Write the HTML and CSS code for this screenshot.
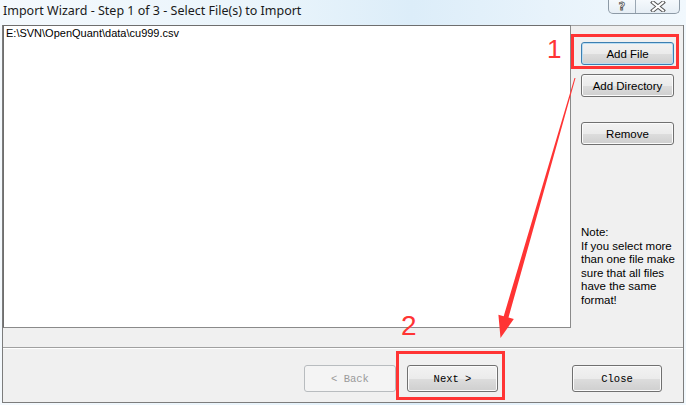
FILE: index.html
```html
<!DOCTYPE html>
<html>
<head>
<meta charset="utf-8">
<link rel="stylesheet" href="styles.css">
</head>
<body>
<div class="window">
  <div class="titlebar">
    <span class="title">Import Wizard - Step 1 of 3 - Select File(s) to Import</span>
    <div class="caption">
      <span class="cbtn help">?</span>
      <span class="cbtn close"><svg width="16" height="11" viewBox="0 0 16 11"><path d="M3 1.5 L13 9.5 M13 1.5 L3 9.5" stroke="#555" stroke-width="4" stroke-linecap="square"/><path d="M3 1.5 L13 9.5 M13 1.5 L3 9.5" stroke="#fff" stroke-width="2" stroke-linecap="square"/></svg></span>
    </div>
  </div>
  <div class="client">
    <div class="main">
      <div class="listbox">
        <div class="item">E:\SVN\OpenQuant\data\cu999.csv</div>
      </div>
      <div class="side">
        <button class="btn side-btn default">Add File</button>
        <button class="btn side-btn">Add Directory</button>
        <button class="btn side-btn remove">Remove</button>
        <div class="note">Note:<br>If you select more<br>than one file make<br>sure that all files<br>have the same<br>format!</div>
      </div>
    </div>
    <div class="strip"></div>
    <div class="footer">
      <button class="btn mono back" disabled>&lt; Back</button>
      <button class="btn mono next">Next &gt;</button>
      <button class="btn mono closebtn">Close</button>
    </div>
  </div>
  <div class="mark box1"></div>
  <div class="mark box2"></div>
  <span class="num n1">1</span>
  <span class="num n2">2</span>
  <svg class="arrow" width="686" height="405" viewBox="0 0 686 405">
    <polygon points="574.5,77.9 575.5,78.1 508.5,317.6 513.8,319.1 500.5,338 498.4,314.7 503.7,316.2" fill="#ff3434"/>
  </svg>
</div>
</body>
</html>
```
FILE: styles.css
```css
* { box-sizing: border-box; }
html, body { margin: 0; padding: 0; }
body { width: 686px; height: 405px; overflow: hidden; }

.window {
  position: relative;
  width: 686px;
  height: 405px;
  background: linear-gradient(to right, #f4f9fd 0%, #e9f4fb 40%, #dcedf9 60%, #e8f3fb 80%, #f1f8fd 100%);
  font-family: "Liberation Sans", Arial, sans-serif;
}

.titlebar {
  height: 25px;
  display: flex;
  justify-content: space-between;
  align-items: flex-start;
}
.title {
  font-family: "Noto Sans", "Open Sans", sans-serif;
  font-size: 12.5px;
  color: #1a1a1a;
  padding: 2px 0 0 3px;
  line-height: 17px;
}
.caption {
  display: flex;
  margin-right: 6px;
  margin-top: -1px;
  border: 1px solid #8d9aa6;
  border-top: none;
  border-radius: 0 0 5px 5px;
  background: linear-gradient(#f6fafd, #e6eef5);
  height: 15px;
}
.cbtn {
  display: flex;
  align-items: center;
  justify-content: center;
  height: 14px;
}
.help {
  width: 27px;
  border-right: 1px solid #9aa7b3;
  font-family: "DejaVu Sans", sans-serif;
  font-size: 11px;
  font-weight: bold;
  color: #fff;
  -webkit-text-stroke: 0.8px #555;
}
.close { width: 43px; }

.client {
  margin-left: 2px;
  width: 682px;
  height: 378px;
  border-left: 1px solid #7c7c7c;
  border-right: 1px solid #7c7c7c;
  border-bottom: 1px solid #7c7c7c;
  background: #f0f0f0;
  display: flex;
  flex-direction: column;
}

.main {
  display: flex;
  height: 303px;
}
.listbox {
  width: 568px;
  height: 303px;
  background: #fff;
  border: 1px solid #8a8a8a;
  border-top-color: #6e6e6e;
  border-left-color: #6e6e6e;
  padding: 1px 0 0 2px;
}
.item {
  font-size: 11px;
  line-height: 13px;
  color: #000;
}

.side {
  width: 112px;
  display: flex;
  flex-direction: column;
  padding: 16px 0 0 10px;
  border-top: 1px solid #a0a0a0;
}
.btn {
  font-family: "Liberation Sans", Arial, sans-serif;
  font-size: 11.5px;
  color: #000;
  border: 1px solid #707070;
  border-radius: 3px;
  background: linear-gradient(#f2f2f2 0%, #ebebeb 50%, #dddddd 51%, #cfcfcf 100%);
  box-shadow: inset 0 0 0 1px #fbfbfb;
  padding: 0;
  margin: 0;
}
.side-btn {
  width: 93px;
  height: 23px;
  margin-bottom: 9px;
}
.side-btn.default {
  border-color: #3c7fb1;
  box-shadow: inset 0 0 0 1px #b9dcf2;
}
.side-btn.remove { margin-top: 16px; }
.note {
  margin-top: 72px;
  font-size: 11.5px;
  line-height: 13.6px;
  color: #000;
}

.strip {
  height: 20px;
  border-bottom: 1px solid #a0a0a0;
}
.footer {
  flex: 1;
  display: flex;
  align-items: flex-start;
  padding: 16px 0 0 301px;
  border-top: 1px solid #fff;
}
.mono {
  font-family: "Liberation Mono", "Courier New", monospace;
  font-size: 10.5px;
  height: 27px;
}
.back {
  width: 92px;
  color: #9a9a9a;
  border-color: #b8bcbf;
  background: #f4f4f4;
  box-shadow: none;
}
.next { width: 91px; margin-left: 11px; }
.closebtn { width: 90px; margin-left: 74px; }

.mark {
  position: absolute;
  border: 3px solid #ff3434;
}
.box1 { left: 571px; top: 34px; width: 108px; height: 35px; }
.box2 { left: 396px; top: 351px; width: 109px; height: 49px; }
.num {
  position: absolute;
  font-family: "Liberation Sans", Arial, sans-serif;
  color: #ff3434;
  line-height: 1;
}
.n1 { left: 547px; top: 36px; font-size: 26px; }
.n2 { left: 401px; top: 312px; font-size: 28px; }
.arrow {
  position: absolute;
  left: 0;
  top: 0;
  pointer-events: none;
}
```
